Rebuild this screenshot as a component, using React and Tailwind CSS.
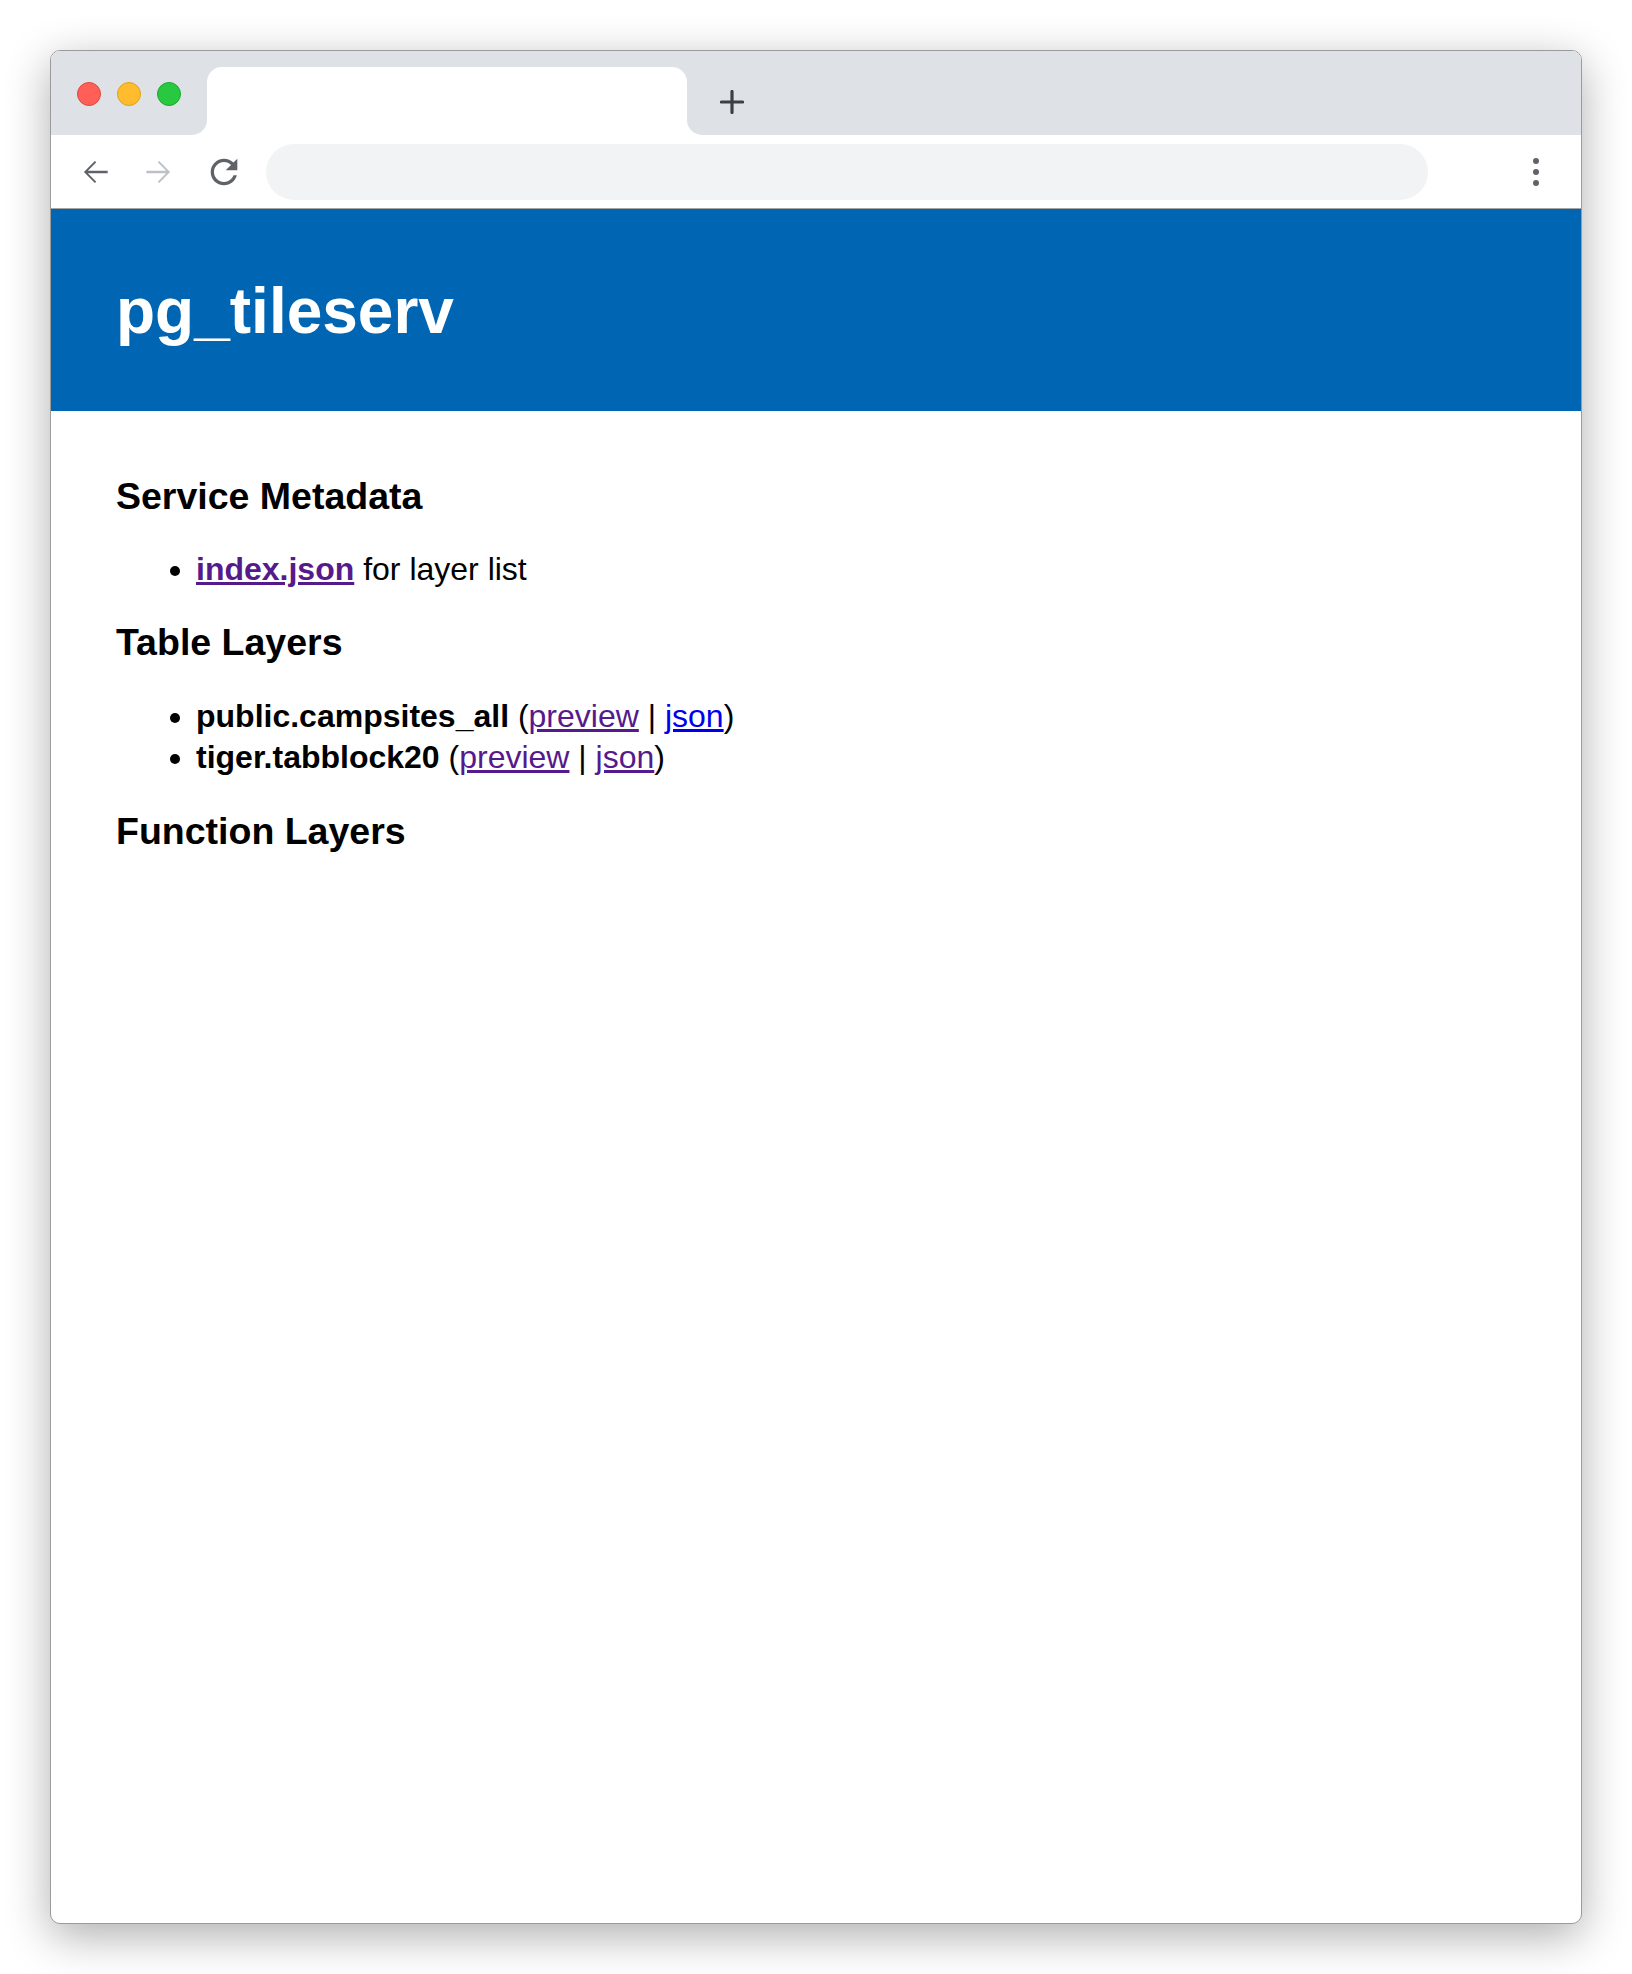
import React from 'react';

const font = { fontFamily: '"Liberation Sans", Arial, Helvetica, sans-serif' };

function BackIcon({ color }) {
  return (
    <svg width="38" height="38" viewBox="0 0 24 24" fill={color}>
      <path d="M20 11.2H7.5l5.3-5.3-.9-.9L5 12l6.9 7 .9-.9-5.3-5.3H20v-1.6z" />
    </svg>
  );
}

function ForwardIcon({ color }) {
  return (
    <svg width="38" height="38" viewBox="0 0 24 24" fill={color}>
      <path d="M4 11.2h12.5l-5.3-5.3.9-.9L19 12l-6.9 7-.9-.9 5.3-5.3H4v-1.6z" />
    </svg>
  );
}

function ReloadIcon() {
  return (
    <svg width="40" height="40" viewBox="0 0 24 24" fill="#5f6368">
      <path d="M17.65 6.35C16.2 4.9 14.21 4 12 4c-4.42 0-7.99 3.58-7.99 8s3.57 8 7.99 8c3.73 0 6.84-2.55 7.73-6h-2.08c-.82 2.33-3.04 4-5.65 4-3.31 0-6-2.69-6-6s2.69-6 6-6c1.66 0 3.14.69 4.22 1.78L13 11h7V4l-2.350 2.35z" />
    </svg>
  );
}

export default function App() {
  return (
    <div className="bg-white w-[1632px] h-[1974px] p-[50px]" style={font}>
      <div className="h-full flex flex-col rounded-[10px] overflow-hidden border border-[#9b9b9b] bg-white shadow-[0_12px_45px_rgba(0,0,0,0.32)]">
        {/* tab strip */}
        <div className="h-[84px] flex bg-white shrink-0">
          <div className="w-[156px] bg-[#dee1e6] rounded-br-[15px] flex items-start gap-[16px] pl-[26px] pt-[31px]">
            <span className="w-[24px] h-[24px] rounded-full bg-[#ff5f57] border border-[#e2463f]" />
            <span className="w-[24px] h-[24px] rounded-full bg-[#febc2e] border border-[#e1a116]" />
            <span className="w-[24px] h-[24px] rounded-full bg-[#28c840] border border-[#1aab29]" />
          </div>
          <div className="w-[480px] bg-[#dee1e6]">
            <div className="mt-[16px] h-[68px] bg-white rounded-t-[15px]" />
          </div>
          <div className="flex-1 bg-[#dee1e6] rounded-bl-[15px] pl-[33px] pt-[39px]">
            <svg width="24" height="24" viewBox="0 0 24 24">
              <path d="M12 1.5v21M1.5 12h21" stroke="#3c4043" strokeWidth="3.2" strokeLinecap="round" />
            </svg>
          </div>
        </div>

        {/* toolbar */}
        <div className="h-[74px] flex items-center border-b border-[#a5a5a5] shrink-0 pl-[25px] pr-[42px]">
          <BackIcon color="#5f6368" />
          <div className="ml-[26px]">
            <ForwardIcon color="#bdc1c6" />
          </div>
          <div className="ml-[26px]">
            <ReloadIcon />
          </div>
          <div className="ml-[22px] w-[1162px] h-[56px] rounded-full bg-[#f1f3f4]" />
          <div className="ml-auto flex flex-col gap-[5px] items-center">
            <span className="w-[6px] h-[6px] rounded-full bg-[#5f6368]" />
            <span className="w-[6px] h-[6px] rounded-full bg-[#5f6368]" />
            <span className="w-[6px] h-[6px] rounded-full bg-[#5f6368]" />
          </div>
        </div>

        {/* page header */}
        <div className="h-[202px] bg-[#0066b3] shrink-0 pl-[65px] pt-[70px]">
          <h1 className="text-white font-bold text-[64px] leading-[64px]">pg_tileserv</h1>
        </div>

        {/* page body */}
        <div className="flex-1 pl-[65px] pt-[64px] text-black">
          <h3 className="font-bold text-[37.5px] leading-[43px] mb-[31px]">Service Metadata</h3>
          <ul className="list-disc pl-[80px] text-[32px] leading-[41px] mb-[31px]">
            <li>
              <a href="#" className="font-bold text-[#551a8b] underline">index.json</a> for layer list
            </li>
          </ul>

          <h3 className="font-bold text-[37.5px] leading-[43px] mb-[32px]">Table Layers</h3>
          <ul className="list-disc pl-[80px] text-[32px] leading-[41px] mb-[32px]">
            <li>
              <b>public.campsites_all</b> (<a href="#" className="text-[#551a8b] underline">preview</a> | <a href="#" className="text-[#0000ee] underline">json</a>)
            </li>
            <li>
              <b>tiger.tabblock20</b> (<a href="#" className="text-[#551a8b] underline">preview</a> | <a href="#" className="text-[#551a8b] underline">json</a>)
            </li>
          </ul>

          <h3 className="font-bold text-[37.5px] leading-[43px]">Function Layers</h3>
        </div>
      </div>
    </div>
  );
}
